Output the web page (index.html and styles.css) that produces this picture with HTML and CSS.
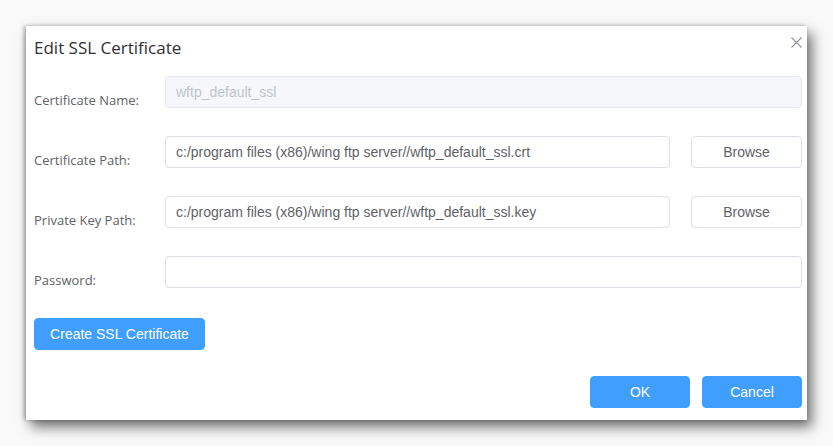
FILE: index.html
```html
<!DOCTYPE html>
<html lang="en">
<head>
  <meta charset="UTF-8">
  <title>Edit SSL Certificate</title>
  <link rel="stylesheet" href="styles.css">
</head>
<body>
  <div class="dialog">
    <div class="dialog-header">
      <span class="dialog-title">Edit SSL Certificate</span>
      <button class="close-btn" aria-label="Close">
        <svg width="11" height="11" viewBox="0 0 11 11"><path d="M0.5 0.5 L10.5 10.5 M10.5 0.5 L0.5 10.5" stroke="#909399" stroke-width="1.1" fill="none"/></svg>
      </button>
    </div>

    <div class="form">
      <div class="form-row">
        <label class="form-label">Certificate Name:</label>
        <input class="text-input" type="text" value="wftp_default_ssl" disabled>
      </div>
      <div class="form-row">
        <label class="form-label">Certificate Path:</label>
        <input class="text-input" type="text" value="c:/program files (x86)/wing ftp server//wftp_default_ssl.crt">
        <button class="btn btn-plain">Browse</button>
      </div>
      <div class="form-row">
        <label class="form-label">Private Key Path:</label>
        <input class="text-input" type="text" value="c:/program files (x86)/wing ftp server//wftp_default_ssl.key">
        <button class="btn btn-plain">Browse</button>
      </div>
      <div class="form-row">
        <label class="form-label">Password:</label>
        <input class="text-input" type="password">
      </div>
    </div>

    <button class="btn btn-primary btn-create">Create SSL Certificate</button>

    <div class="dialog-footer">
      <button class="btn btn-primary btn-footer">OK</button>
      <button class="btn btn-primary btn-footer">Cancel</button>
    </div>
  </div>
</body>
</html>
```

FILE: styles.css
```css
body {
  margin: 0;
  padding: 26px;
  background-color: #f9f9f9;
  font-family: 'Liberation Sans', Arial, sans-serif;
}

.dialog {
  width: 781px;
  height: 394px;
  box-sizing: border-box;
  background: #ffffff;
  padding: 0 5px 0 8px;
  box-shadow: 5px 7px 12px rgba(0, 0, 0, 0.55), -2px 0 4px rgba(0, 0, 0, 0.3);
  display: flex;
  flex-direction: column;
}

.dialog-header {
  display: flex;
  justify-content: space-between;
  align-items: flex-start;
  height: 50px;
}

.dialog-title {
  font-family: 'Open Sans', sans-serif;
  font-size: 17px;
  color: #303133;
  margin-top: 10px;
}

.close-btn {
  border: none;
  background: none;
  padding: 0;
  margin: 10px 0 0 0;
  width: 11px;
  height: 11px;
  cursor: pointer;
}

.form {
  display: flex;
  flex-direction: column;
  gap: 28px;
}

.form-row {
  display: flex;
  align-items: flex-start;
}

.form-label {
  width: 131px;
  flex-shrink: 0;
  padding-top: 16px;
  font-family: 'Open Sans', sans-serif;
  font-size: 13px;
  line-height: 16px;
  color: #606266;
}

.text-input {
  flex: 1;
  height: 32px;
  box-sizing: border-box;
  border: 1px solid #dcdfe6;
  border-radius: 4px;
  padding: 0 10px;
  font-family: 'Liberation Sans', Arial, sans-serif;
  font-size: 14px;
  color: #606266;
  background: #ffffff;
}

.text-input:disabled {
  background: #f5f7fa;
  border-color: #e4e7ed;
  color: #c0c4cc;
}

.btn {
  height: 32px;
  box-sizing: border-box;
  border-radius: 4px;
  font-family: 'Liberation Sans', Arial, sans-serif;
  font-size: 14px;
  cursor: pointer;
}

.btn-plain {
  width: 111px;
  margin-left: 21px;
  background: #ffffff;
  border: 1px solid #dcdfe6;
  color: #606266;
}

.btn-primary {
  background: #409eff;
  border: 1px solid #409eff;
  color: #ffffff;
}

.btn-create {
  align-self: flex-start;
  width: 171px;
  margin-top: 30px;
}

.dialog-footer {
  display: flex;
  justify-content: flex-end;
  gap: 12px;
  margin-top: 26px;
}

.btn-footer {
  width: 100px;
}
```
